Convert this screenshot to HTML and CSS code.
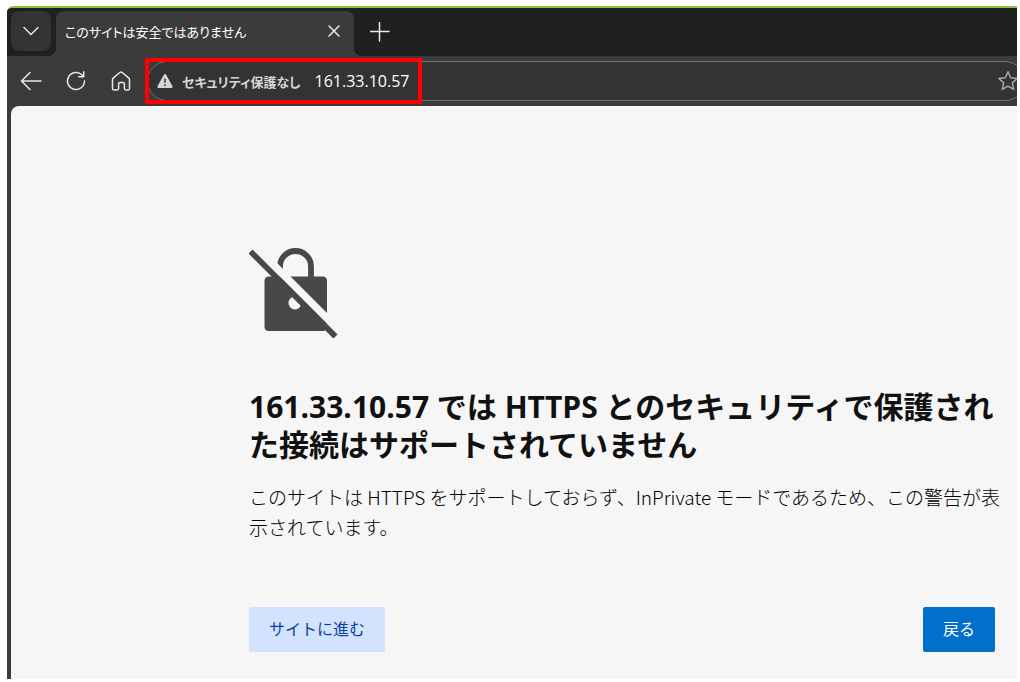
FILE: index.html
```
<!DOCTYPE html>
<html lang="ja">
<head>
	<meta charset="utf-8">
	<title>このサイトは安全ではありません</title>
	<link rel="stylesheet" href="styles.css">
</head>
<body>
	<div class="browser">
		<div class="tab-strip">
			<button class="tab-menu" type="button" aria-label="タブ操作メニュー">
				<svg width="16" height="10" viewBox="0 0 16 10"><path d="M1 1.500l7 7 7-7"/></svg>
			</button>
			<div class="tab">
				<span class="tab-title">このサイトは安全ではありません</span>
				<button class="tab-close" type="button" aria-label="タブを閉じる">
					<svg width="12" height="12" viewBox="0 0 12 12"><path d="M1 1l10 10M11 1L1 11"/></svg>
				</button>
			</div>
			<button class="new-tab" type="button" aria-label="新しいタブ">
				<svg width="20" height="20" viewBox="0 0 20 20"><path d="M9.500 0v19M0 9.500h19"/></svg>
			</button>
		</div>
		<div class="toolbar">
			<button class="tool" type="button" aria-label="戻る">
				<svg width="22" height="20" viewBox="0 0 22 20"><path d="M10 1.500L1.500 10l8.500 8.500M1.500 10H21"/></svg>
			</button>
			<button class="tool" type="button" aria-label="更新">
				<svg width="22" height="22" viewBox="0 0 22 22"><path d="M19.500 11A8.500 8.500 0 1 1 17 5l1.500 1.600M18.700 1.800v5h-5"/></svg>
			</button>
			<button class="tool" type="button" aria-label="ホーム">
				<svg width="20" height="20" viewBox="0 0 20 20"><path d="M1.500 8.800c0-.8.300-1.400.900-1.900l6.400-5.400c.7-.6 1.700-.6 2.400 0l6.400 5.400c.6.500.9 1.100.9 1.900v8.700c0 .8-.6 1.400-1.400 1.400h-2.300c-.8 0-1.400-.6-1.400-1.400V13c0-.8-.6-1.400-1.400-1.400h-3c-.8 0-1.400.6-1.400 1.400v4.500c0 .8-.6 1.400-1.400 1.400H2.900c-.8 0-1.400-.6-1.400-1.400z"/></svg>
			</button>
			<div class="address-bar">
				<div class="security">
					<svg width="16" height="14" viewBox="0 0 16 14"><path class="solid" d="M6.900.7c.5-.9 1.700-.9 2.200 0l6.300 11.400c.5.900-.1 1.900-1.100 1.900H1.700c-1 0-1.600-1-1.100-1.900z"/><path class="mark" d="M8 4.500v4.300M8 10.300v1.700"/></svg>
					<span>セキュリティ保護なし</span>
				</div>
				<input class="address" type="text" value="161.33.10.57" aria-label="アドレス">
				<button class="favorite" type="button" aria-label="お気に入り">
					<svg width="22" height="22" viewBox="0 0 22 22"><path d="M11 1.800l2.700 6 6.500.7-4.900 4.400 1.400 6.500L11 16.100l-5.700 3.300 1.400-6.500L1.800 8.500l6.500-.7z"/></svg>
				</button>
			</div>
			<div class="highlight"></div>
		</div>
		<main class="page">
			<svg class="lock" width="90" height="90" viewBox="0 0 90 90">
				<path d="M31 24v-5.500a15.500 15.500 0 0 1 31 0V32" fill="none" stroke="#484848" stroke-width="5.800"/>
				<path fill="#484848" d="M20 28.500h53.500c3 0 4.500 1.500 4.500 4.500v45.500c0 3-1.500 4.500-4.500 4.500H20c-3 0-4.500-1.500-4.500-4.500V33c0-3 1.500-4.500 4.500-4.500z"/>
				<circle cx="46" cy="55" r="6.500" fill="#f6f6f6"/>
				<path d="M12 4.400L88 80.400" stroke="#f6f6f6" stroke-width="7.700"/>
				<path d="M1.500 3.500L86.500 88.500" stroke="#484848" stroke-width="5.800"/>
			</svg>
			<h1>161.33.10.57 では HTTPS とのセキュリティで保護され<br>た接続はサポートされていません</h1>
			<p>このサイトは HTTPS をサポートしておらず、InPrivate モードであるため、この警告が表<br>示されています。</p>
			<div class="actions">
				<button class="proceed" type="button">サイトに進む</button>
				<button class="back" type="button">戻る</button>
			</div>
		</main>
	</div>
</body>
</html>
```
FILE: styles.css
```
* {
	box-sizing: border-box;
}

body {
	margin: 0;
	padding: 6px 3px 3px 7px;
	min-height: 100vh;
	display: flex;
	background: #fff;
	font-family: "Open Sans", "Noto Sans CJK JP", sans-serif;
}

button, input {
	margin: 0;
	padding: 0;
	border: 0;
	background: none;
	color: inherit;
	font-family: inherit;
}

svg {
	display: block;
	flex-shrink: 0;
}

.browser {
	flex: 1;
	min-width: 0;
	display: flex;
	flex-direction: column;
	overflow: hidden;
	border-top: 2px solid #8bc441;
	border-top-left-radius: 6px;
	background: #3b3b3b;
	color: #fff;
}

.tab-strip svg, .toolbar svg {
	fill: none;
	stroke: #e8e8e8;
	stroke-width: 1.500;
	stroke-linecap: round;
	stroke-linejoin: round;
}

.tab-strip {
	display: flex;
	height: 48px;
	padding: 3px 4px 0;
	background: #202020;
}

.tab-menu {
	display: flex;
	align-items: center;
	justify-content: center;
	width: 40px;
	height: 40px;
	border-radius: 8px;
	background: #333;
}

.tab {
	position: relative;
	display: flex;
	align-items: center;
	justify-content: space-between;
	width: 298px;
	margin-left: 5px;
	padding: 0 13px 5px 9px;
	border-radius: 8px 8px 0 0;
	background: #3b3b3b;
}

/* curved feet of the active tab */
.tab::before, .tab::after {
	content: "";
	position: absolute;
	bottom: 0;
	width: 8px;
	height: 8px;
}

.tab::before {
	right: 100%;
	background: radial-gradient(circle at 0 0, #202020 8px, #3b3b3b 8px);
}

.tab::after {
	left: 100%;
	background: radial-gradient(circle at 100% 0, #202020 8px, #3b3b3b 8px);
}

.tab-title {
	font-size: 13px;
	white-space: nowrap;
	font-feature-settings: "palt";
}

.tab-close {
	padding: 1px;
}

.new-tab {
	margin-left: 16px;
	padding-bottom: 4px;
}

.toolbar {
	position: relative;
	display: flex;
	align-items: center;
	height: 50px;
	padding-left: 1px;
}

.tool {
	display: flex;
	align-items: center;
	justify-content: center;
	width: 45px;
	height: 40px;
}

.address-bar {
	flex: 1;
	display: flex;
	align-items: center;
	height: 40px;
	margin: 0 -8px 0 4px;
	padding: 0 5px 0 9px;
	border: 1px solid #707070;
	border-radius: 20px;
	background: #333;
}

.security {
	display: flex;
	align-items: center;
	gap: 9px;
	color: #d6d6d6;
	font-size: 13px;
	font-weight: bold;
	white-space: nowrap;
	font-feature-settings: "palt";
}

.security .solid {
	fill: #d6d6d6;
	stroke: none;
}

.security .mark {
	stroke: #333;
	stroke-linecap: butt;
}

.address {
	flex: 1;
	min-width: 0;
	margin-left: 14px;
	font-size: 16px;
	outline: none;
}

.favorite svg {
	stroke: #a8a8a8;
}

.highlight {
	position: absolute;
	top: 2px;
	left: 138px;
	width: 277px;
	height: 46px;
	border: 4px solid #f00;
	pointer-events: none;
}

.page {
	flex: 1;
	margin-left: 4px;
	padding: 142px 22px 0 238px;
	border-top-left-radius: 8px;
	background: #f6f6f6;
	color: #111;
}

h1 {
	margin: 50px 0 0;
	font-size: 30px;
	line-height: 38px;
	white-space: nowrap;
}

p {
	margin: 18px 0 0;
	color: #000;
	font-family: "Noto Sans CJK JP", sans-serif;
	font-size: 19px;
	font-weight: 300;
	line-height: 30px;
	white-space: nowrap;
}

.actions {
	display: flex;
	justify-content: space-between;
	margin-top: 65px;
}

.actions button {
	height: 45px;
	padding: 0 20px 3px;
	border-radius: 2px;
	font-size: 16px;
}

.proceed {
	background: #d3e3fd;
	color: #0842a0;
}

.back {
	background: #0070cb;
	color: #fff;
}
```
